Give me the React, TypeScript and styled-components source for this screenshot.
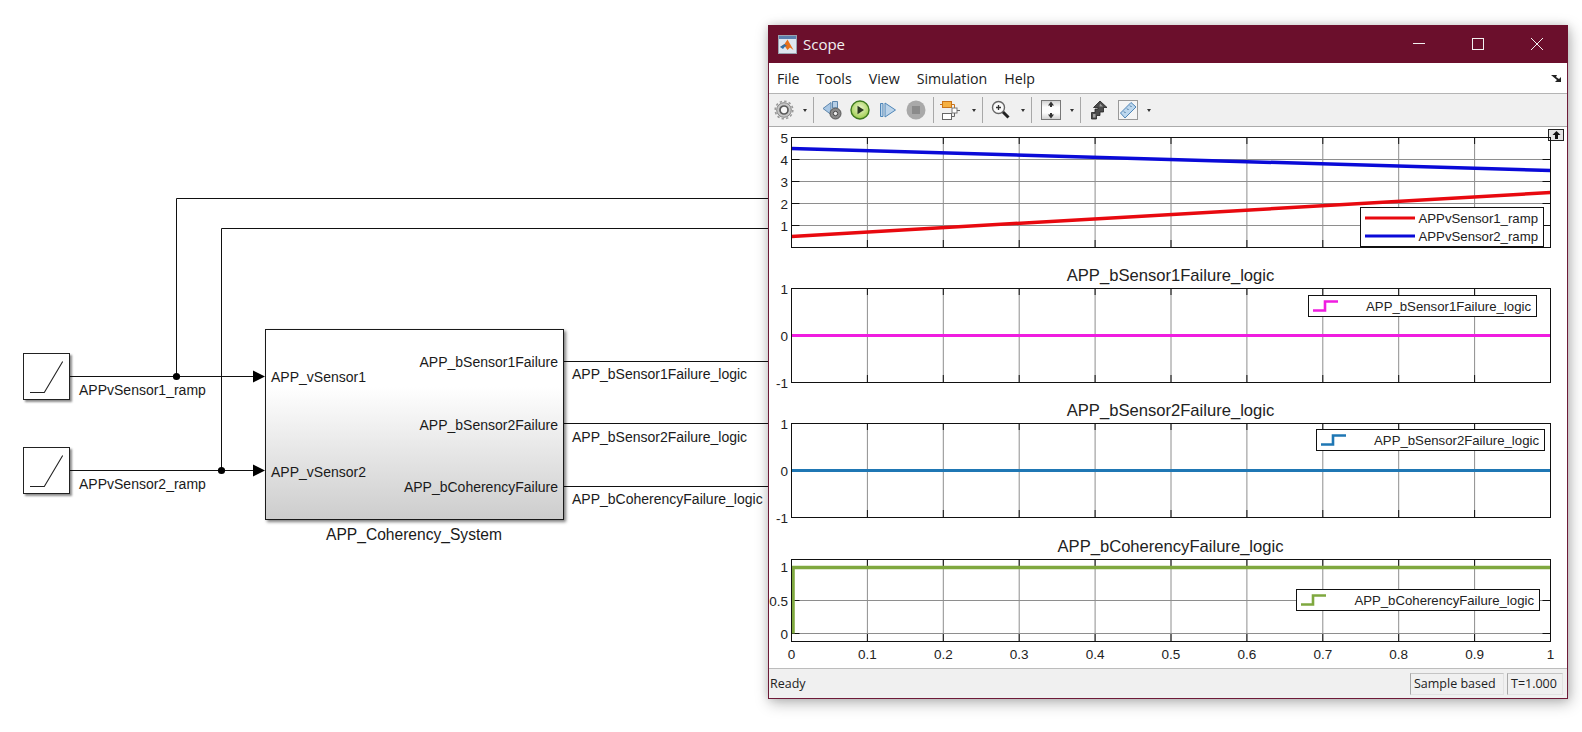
import React from "react";
import styled, { createGlobalStyle } from "styled-components";

const GlobalStyle = createGlobalStyle`
  html, body {
    margin: 0;
    padding: 0;
    background: #ffffff;
    overflow: hidden;
  }
  #root {
    width: 1582px;
    height: 732px;
  }
`;

const Page = styled.div`
  position: relative;
  width: 1582px;
  height: 732px;
  background: #fff;
  overflow: hidden;
  font-family: "Liberation Sans", Arial, sans-serif;
  color: #1a1a1a;
`;

/* ---------- simulink canvas ---------- */

const Wires = styled.svg`
  position: absolute;
  left: 0;
  top: 0;
`;

const Ramp = styled.div<{ $top: number }>`
  position: absolute;
  left: 23px;
  top: ${(p) => p.$top}px;
  width: 45px;
  height: 45px;
  border: 1px solid #222;
  background: #fff;
  box-shadow: 2px 2px 2px rgba(0, 0, 0, 0.45);
`;

const Subsystem = styled.div`
  position: absolute;
  left: 265px;
  top: 329px;
  width: 297px;
  height: 189px;
  border: 1px solid #1a1a1a;
  background: linear-gradient(180deg, #fff 0%, #fff 30%, #cdcdcd 100%);
  box-shadow: 2px 2px 3px rgba(0, 0, 0, 0.5);
`;

const Label = styled.span<{ $x: number; $y: number; $right?: boolean; $big?: boolean }>`
  position: absolute;
  ${(p) => (p.$right ? `right: ${1582 - p.$x}px;` : `left: ${p.$x}px;`)}
  top: ${(p) => p.$y}px;
  font-size: ${(p) => (p.$big ? 15.6 : 14)}px;
  line-height: 16px;
  white-space: nowrap;
`;

/* ---------- scope window ---------- */

const ScopeWindow = styled.div`
  position: absolute;
  left: 768px;
  top: 25px;
  width: 800px;
  height: 674px;
  box-sizing: border-box;
  border: 1px solid #6e1a38;
  border-top: none;
  background: #fff;
  display: flex;
  flex-direction: column;
  box-shadow: 2px 4px 14px rgba(0, 0, 0, 0.28), 0 0 8px rgba(0, 0, 0, 0.12);
`;

const TitleBar = styled.div`
  height: 38px;
  margin: 0 -1px;
  background: #6b0f2c;
  display: flex;
  align-items: center;
  padding: 0 2px 0 10px;
  color: #f2f0f0;
  font-family: "Open Sans", sans-serif;
  font-size: 15px;
  flex: none;
`;

const TitleText = styled.span`
  margin-left: 6px;
  flex: 1;
`;

const WindowButton = styled.div`
  width: 59px;
  height: 38px;
  display: flex;
  align-items: center;
  justify-content: center;
`;

const MenuBar = styled.div`
  height: 30px;
  flex: none;
  display: flex;
  align-items: center;
  padding: 0 5px 0 8px;
  gap: 17px;
  font-family: "Open Sans", sans-serif;
  font-size: 14.2px;
  color: #202020;
  border-bottom: 1px solid #b4b4b4;
`;

const MenuSpacer = styled.div`
  flex: 1;
`;

const Toolbar = styled.div`
  height: 32px;
  flex: none;
  background: #f0f0f0;
  border-bottom: 1px solid #ababab;
  display: flex;
  align-items: center;
  padding-left: 5px;
`;

const ToolIcon = styled.svg<{ $gap?: number }>`
  flex: none;
  display: block;
  margin-left: ${(p) => p.$gap ?? 0}px;
`;

const Caret = styled.div<{ $gap: number }>`
  flex: none;
  margin-left: ${(p) => p.$gap}px;
  width: 0;
  height: 0;
  border-left: 2.5px solid transparent;
  border-right: 2.5px solid transparent;
  border-top: 3px solid #333;
`;

const ToolSep = styled.div<{ $gap: number }>`
  flex: none;
  margin-left: ${(p) => p.$gap}px;
  width: 1px;
  height: 26px;
  background: #a8a8a8;
`;

const PlotArea = styled.div`
  flex: 1;
  position: relative;
  padding-top: 10px;
  background: #fff;
  min-height: 0;
`;

const PlotTitle = styled.div<{ $h: number }>`
  height: ${(p) => p.$h}px;
  box-sizing: border-box;
  margin-left: 22px;
  width: 759px;
  font-size: 16.6px;
  line-height: 19px;
  display: flex;
  align-items: flex-end;
  justify-content: center;
  padding-bottom: 3px;
  color: #222;
`;

const AxesWrap = styled.div`
  position: relative;
  width: 797px;
`;

const AxesSvg = styled.svg`
  display: block;
  overflow: visible;
`;

const Legend = styled.div<{ $right: number; $top: number; $h: number }>`
  position: absolute;
  right: ${(p) => p.$right}px;
  top: ${(p) => p.$top}px;
  height: ${(p) => p.$h}px;
  box-sizing: border-box;
  border: 1px solid #111;
  background: #fff;
  display: flex;
  flex-direction: column;
  justify-content: center;
  padding: 0 5px 0 4px;
  font-size: 13.2px;
  color: #222;
`;

const LegendRow = styled.div<{ $w: number }>`
  display: flex;
  align-items: center;
  height: 18px;
  white-space: nowrap;
  svg {
    flex: none;
    display: block;
    margin-right: ${(p) => p.$w}px;
  }
`;

const TopButton = styled.div`
  position: absolute;
  right: 3px;
  top: 2px;
  width: 14px;
  height: 10px;
  border: 1px solid #222;
  background: #e4e4e4;
  display: flex;
  align-items: center;
  justify-content: center;
`;

const StatusBar = styled.div`
  height: 29px;
  flex: none;
  background: #f0f0f0;
  border-top: 1px solid #bcbcbc;
  display: flex;
  align-items: center;
  padding: 0 4px 0 1px;
  font-family: "Open Sans", sans-serif;
  font-size: 12.5px;
  color: #222;
`;

const StatusText = styled.span`
  flex: 1;
`;

const StatusCell = styled.div<{ $w: number }>`
  width: ${(p) => p.$w}px;
  height: 22px;
  box-sizing: border-box;
  margin-left: 3px;
  border-left: 1px solid #a8a8a8;
  border-top: 1px solid #c4c4c4;
  border-right: 1px solid #e2e2e2;
  border-bottom: 1px solid #e2e2e2;
  display: flex;
  align-items: center;
  padding-left: 3px;
  white-space: nowrap;
`;

/* ---------- plot data ---------- */

const LEFT = 22;
const WIDTH = 759;
const xTicks = [0, 0.1, 0.2, 0.3, 0.4, 0.5, 0.6, 0.7, 0.8, 0.9, 1];

interface AxesProps {
  height: number;
  yTicks: { v: number; label: string }[];
  yMin: number;
  yMax: number;
  lines: { color: string; width: number; points: [number, number][] }[];
  showX?: boolean;
  hGrid?: boolean;
}

const Axes = (props: AxesProps) => {
  const { height, yTicks, yMin, yMax, lines } = props;
  const px = (x: number) => LEFT + 0.5 + x * WIDTH;
  const py = (y: number) => 0.5 + ((yMax - y) / (yMax - yMin)) * height;
  return (
    <AxesSvg width={797} height={height}>
      {xTicks.slice(1, -1).map((t) => (
        <g key={t}>
          <line x1={px(t)} x2={px(t)} y1={0} y2={height} stroke="#8e8e8e" />
          <line x1={px(t)} x2={px(t)} y1={0} y2={7} stroke="#111" />
          <line x1={px(t)} x2={px(t)} y1={height - 7} y2={height} stroke="#111" />
        </g>
      ))}
      {props.hGrid &&
        yTicks.map((t) => (
          <g key={t.label}>
            <line x1={px(0)} x2={px(1)} y1={py(t.v)} y2={py(t.v)} stroke="#8e8e8e" />
            <line x1={px(0)} x2={px(0) + 8} y1={py(t.v)} y2={py(t.v)} stroke="#111" />
            <line x1={px(1) - 8} x2={px(1)} y1={py(t.v)} y2={py(t.v)} stroke="#111" />
          </g>
        ))}
      {lines.map((l) => (
        <polyline
          key={l.color}
          fill="none"
          stroke={l.color}
          strokeWidth={l.width}
          points={l.points.map(([x, y]) => `${px(x)},${py(y)}`).join(" ")}
        />
      ))}
      <rect x={px(0)} y={0.5} width={WIDTH} height={height} fill="none" stroke="#111" />
      <g fontFamily="Liberation Sans, Arial, sans-serif" fontSize={13.5} fill="#222">
        {yTicks.map((t) => (
          <text key={t.label} x={LEFT - 3} y={py(t.v) + 5} textAnchor="end">
            {t.label}
          </text>
        ))}
        {props.showX &&
          xTicks.map((t) => (
            <text key={t} x={px(t)} y={height + 18} textAnchor="middle">
              {t}
            </text>
          ))}
      </g>
    </AxesSvg>
  );
};

const StepMark = ({ color }: { color: string }) => (
  <svg width={25} height={14} viewBox="0 0 25 14">
    <path d="M0 11.5H12V2.5H25" fill="none" stroke={color} strokeWidth={2.6} />
  </svg>
);

const LineMark = ({ color }: { color: string }) => (
  <svg width={50} height={6} viewBox="0 0 50 6">
    <line x1={0} x2={50} y1={3} y2={3} stroke={color} strokeWidth={3} />
  </svg>
);

const RampIcon = () => (
  <svg width={45} height={45} viewBox="0 0 45 45">
    <path d="M6 38.5H20.3L38.7 7.5" fill="none" stroke="#222" strokeWidth={1.1} />
  </svg>
);

/* ---------- toolbar icons ---------- */

const GearIcon = () => (
  <ToolIcon width={20} height={20} viewBox="0 0 20 20">
    <circle cx={10} cy={10} r={8.8} fill="none" stroke="#9a9a9a" strokeWidth={1.6} strokeDasharray="2.4 2.2" />
    <circle cx={10} cy={10} r={7.3} fill="#c6c6c6" stroke="#868686" strokeWidth={1} />
    <circle cx={10} cy={10} r={4} fill="#f6f6f6" stroke="#5a5a5a" strokeWidth={1.7} />
  </ToolIcon>
);

const BackIcon = () => (
  <ToolIcon $gap={8} width={22} height={22} viewBox="0 0 22 22">
    <path d="M1 9.5L9 3.5V15.5Z" fill="#a9c7e4" stroke="#5d86ad" />
    <path d="M10.5 2.5H15.5V9H10.5Z" fill="#b7cfe6" stroke="#5d86ad" />
    <circle cx={13.5} cy={14.5} r={5.5} fill="#8a8a8a" stroke="#555" />
    <circle cx={13.5} cy={14.5} r={2.2} fill="#eee" stroke="#444" />
  </ToolIcon>
);

const PlayIcon = () => (
  <ToolIcon $gap={6} width={20} height={20} viewBox="0 0 20 20">
    <defs>
      <radialGradient id="playFill" cx="50%" cy="40%" r="60%">
        <stop offset="0%" stopColor="#eef7cf" />
        <stop offset="100%" stopColor="#9ccb4a" />
      </radialGradient>
    </defs>
    <circle cx={10} cy={10} r={9} fill="url(#playFill)" stroke="#3e7a1f" strokeWidth={1.4} />
    <path d="M7.5 5.8L14 10L7.5 14.2Z" fill="#2c3a22" />
  </ToolIcon>
);

const StepIcon = () => (
  <ToolIcon $gap={9} width={18} height={18} viewBox="0 0 18 18">
    <path d="M1.5 2.5H4V15.5H1.5Z" fill="#bcd4ea" stroke="#4f86b8" />
    <path d="M6 2L16.5 9L6 16Z" fill="#bcd4ea" stroke="#4f86b8" />
  </ToolIcon>
);

const StopIcon = () => (
  <ToolIcon $gap={9} width={20} height={20} viewBox="0 0 20 20">
    <circle cx={10} cy={10} r={9.5} fill="#a9a9a9" />
    <rect x={6} y={6} width={8} height={8} fill="#8b8b8b" />
  </ToolIcon>
);

const SignalIcon = () => (
  <ToolIcon $gap={5} width={22} height={22} viewBox="0 0 22 22">
    <rect x={3.5} y={2.5} width={9} height={6} fill="#f5b041" stroke="#c9741a" />
    <path d="M1 5.5H3.5M12.5 5.5H15.5V9" fill="none" stroke="#c9741a" />
    <rect x={13} y={9} width={5} height={5} fill="#fff" stroke="#777" />
    <rect x={3.5} y={14.5} width={9} height={6} fill="#fff" stroke="#666" />
    <path d="M12.5 17.5H15.5V14M18 11.5H21" fill="none" stroke="#666" />
  </ToolIcon>
);

const ZoomIcon = () => (
  <ToolIcon $gap={8} width={20} height={20} viewBox="0 0 20 20">
    <circle cx={7.5} cy={7.5} r={6} fill="#fbfbfb" stroke="#666" strokeWidth={1.4} />
    <path d="M5 7.5H10M7.5 5V10" stroke="#333" strokeWidth={1.3} />
    <path d="M12 12L17.5 17.5" stroke="#222" strokeWidth={3} />
  </ToolIcon>
);

const FitIcon = () => (
  <ToolIcon $gap={9} width={20} height={20} viewBox="0 0 20 20">
    <defs>
      <linearGradient id="fitFill" x1="0" y1="0" x2="0" y2="1">
        <stop offset="0%" stopColor="#cfcfcf" />
        <stop offset="35%" stopColor="#fdfdfd" />
        <stop offset="65%" stopColor="#fdfdfd" />
        <stop offset="100%" stopColor="#cfcfcf" />
      </linearGradient>
    </defs>
    <rect x={0.5} y={0.5} width={19} height={19} fill="url(#fitFill)" stroke="#777" />
    <path d="M10 1.5L13 5.5H11V7H9V5.5H7Z M10 18.5L13 14.5H11V13H9V14.5H7Z" fill="#333" />
  </ToolIcon>
);

const LayoutIcon = () => (
  <ToolIcon $gap={9} width={18} height={20} viewBox="0 0 18 20">
    <path d="M10 1L17 7.5H13.5V12H10V15.5H6.5V19H1.5V12.5H5V9H8V7.5H3.5Z" fill="#4c4c4c" stroke="#222" strokeWidth={0.8} />
    <path d="M10 3.5L13 6.5H9.5Z" fill="#a0a0a0" />
    <path d="M3 14H5.5V17.5H3Z" fill="#a0a0a0" />
  </ToolIcon>
);

const RulerIcon = () => (
  <ToolIcon $gap={10} width={20} height={20} viewBox="0 0 20 20">
    <rect x={0.5} y={0.5} width={19} height={19} fill="#f5f5f5" stroke="#999" />
    <path d="M2.5 13L13 2.5L18 7L7 18Z" fill="#bcd7ee" stroke="#4f86b8" />
    <path d="M6 11.5L7.5 13M9 8.5L10.5 10M12 5.5L13.5 7" stroke="#3a6a94" />
  </ToolIcon>
);

const MatlabIcon = () => (
  <svg width={19} height={19} viewBox="0 0 19 19">
    <rect x={0.5} y={0.5} width={18} height={18} fill="#dfe6f0" stroke="#9aa3b0" />
    <rect x={1} y={1} width={17} height={3} fill="#5b7fae" />
    <path d="M2 12L6.5 9L9.5 4.5L15.5 15L12 12.5L9.5 15L7 11.5Z" fill="#e8701a" />
    <path d="M2 12L6.5 9L9 11L7 11.5L5 14Z" fill="#2f6fa8" />
  </svg>
);

export default function App() {
  return (
    <Page>
      <GlobalStyle />
      <Wires width={770} height={560}>
        <g fill="none" stroke="#111" strokeWidth={1}>
          <path d="M69 376.5H254" />
          <path d="M69 470.5H254" />
          <path d="M176.5 376.5V198.5H768" />
          <path d="M221.5 470.5V228.5H768" />
          <path d="M563 361.5H768" />
          <path d="M563 423.5H768" />
          <path d="M563 486.5H768" />
        </g>
        <g fill="#000">
          <circle cx={176.5} cy={376.5} r={3.6} />
          <circle cx={221.5} cy={470.5} r={3.6} />
          <path d="M253 370.5L265 376.5L253 382.5Z" />
          <path d="M253 464.5L265 470.5L253 476.5Z" />
        </g>
      </Wires>

      <Ramp $top={353}>
        <RampIcon />
      </Ramp>
      <Ramp $top={447}>
        <RampIcon />
      </Ramp>
      <Subsystem />

      <Label $x={79} $y={382}>APPvSensor1_ramp</Label>
      <Label $x={79} $y={476}>APPvSensor2_ramp</Label>
      <Label $x={271} $y={369}>APP_vSensor1</Label>
      <Label $x={271} $y={464}>APP_vSensor2</Label>
      <Label $x={558} $y={354} $right>APP_bSensor1Failure</Label>
      <Label $x={558} $y={417} $right>APP_bSensor2Failure</Label>
      <Label $x={558} $y={479} $right>APP_bCoherencyFailure</Label>
      <Label $x={572} $y={366}>APP_bSensor1Failure_logic</Label>
      <Label $x={572} $y={429}>APP_bSensor2Failure_logic</Label>
      <Label $x={572} $y={491}>APP_bCoherencyFailure_logic</Label>
      <Label $x={326} $y={527} $big>APP_Coherency_System</Label>

      <ScopeWindow>
        <TitleBar>
          <MatlabIcon />
          <TitleText>Scope</TitleText>
          <WindowButton>
            <svg width={12} height={12} viewBox="0 0 12 12">
              <path d="M0 5.5H12" stroke="#f2f0f0" />
            </svg>
          </WindowButton>
          <WindowButton>
            <svg width={12} height={12} viewBox="0 0 12 12">
              <rect x={0.5} y={0.5} width={11} height={11} fill="none" stroke="#f2f0f0" />
            </svg>
          </WindowButton>
          <WindowButton>
            <svg width={12} height={12} viewBox="0 0 12 12">
              <path d="M0 0L12 12M12 0L0 12" stroke="#f2f0f0" />
            </svg>
          </WindowButton>
        </TitleBar>

        <MenuBar>
          <span>File</span>
          <span>Tools</span>
          <span>View</span>
          <span>Simulation</span>
          <span>Help</span>
          <MenuSpacer />
          <svg width={11} height={9} viewBox="0 0 11 9">
            <path d="M0 1L6 1L5 3L8 5L10 3V8H4L6 6L3 3.5Z" fill="#222" />
          </svg>
        </MenuBar>

        <Toolbar>
          <GearIcon />
          <Caret $gap={8.5} />
          <ToolSep $gap={6.5} />
          <BackIcon />
          <PlayIcon />
          <StepIcon />
          <StopIcon />
          <ToolSep $gap={7} />
          <SignalIcon />
          <Caret $gap={10.5} />
          <ToolSep $gap={6.5} />
          <ZoomIcon />
          <Caret $gap={9.5} />
          <ToolSep $gap={6.5} />
          <FitIcon />
          <Caret $gap={8.5} />
          <ToolSep $gap={6.5} />
          <LayoutIcon />
          <RulerIcon />
          <Caret $gap={8.5} />
        </Toolbar>

        <PlotArea>
          <TopButton>
            <svg width={9} height={8} viewBox="0 0 9 8">
              <path d="M4.5 0L8.5 4H6V8H3V4H0.5Z" fill="#111" />
            </svg>
          </TopButton>
          <AxesWrap>
            <Axes
              height={110}
              yMin={0}
              yMax={5}
              hGrid
              yTicks={[5, 4, 3, 2, 1].map((v) => ({ v, label: String(v) }))}
              lines={[
                { color: "#e8090f", width: 3.5, points: [[0, 0.5], [1, 2.5]] },
                { color: "#0a0ad8", width: 3.5, points: [[0, 4.5], [1, 3.5]] },
              ]}
            />
            <Legend $right={22} $top={70} $h={40}>
              <LegendRow $w={4}>
                <LineMark color="#e8090f" />
                APPvSensor1_ramp
              </LegendRow>
              <LegendRow $w={4}>
                <LineMark color="#0a0ad8" />
                APPvSensor2_ramp
              </LegendRow>
            </Legend>
          </AxesWrap>

          <PlotTitle $h={41}>APP_bSensor1Failure_logic</PlotTitle>
          <AxesWrap>
            <Axes
              height={94}
              yMin={-1}
              yMax={1}
              yTicks={[1, 0, -1].map((v) => ({ v, label: String(v) }))}
              lines={[{ color: "#f01de0", width: 3, points: [[0, 0], [1, 0]] }]}
            />
            <Legend $right={29} $top={7} $h={22}>
              <LegendRow $w={28}>
                <StepMark color="#f01de0" />
                APP_bSensor1Failure_logic
              </LegendRow>
            </Legend>
          </AxesWrap>

          <PlotTitle $h={41}>APP_bSensor2Failure_logic</PlotTitle>
          <AxesWrap>
            <Axes
              height={94}
              yMin={-1}
              yMax={1}
              yTicks={[1, 0, -1].map((v) => ({ v, label: String(v) }))}
              lines={[{ color: "#1f77b4", width: 3, points: [[0, 0], [1, 0]] }]}
            />
            <Legend $right={21} $top={6} $h={22}>
              <LegendRow $w={28}>
                <StepMark color="#1f77b4" />
                APP_bSensor2Failure_logic
              </LegendRow>
            </Legend>
          </AxesWrap>

          <PlotTitle $h={42}>APP_bCoherencyFailure_logic</PlotTitle>
          <AxesWrap>
            <Axes
              height={82}
              yMin={-0.121}
              yMax={1.121}
              hGrid
              showX
              yTicks={[
                { v: 1, label: "1" },
                { v: 0.5, label: "0.5" },
                { v: 0, label: "0" },
              ]}
              lines={[{ color: "#7fa83f", width: 3.5, points: [[0.002, 0], [0.002, 1], [1, 1]] }]}
            />
            <Legend $right={26} $top={30} $h={22}>
              <LegendRow $w={28}>
                <StepMark color="#7fa83f" />
                APP_bCoherencyFailure_logic
              </LegendRow>
            </Legend>
          </AxesWrap>
        </PlotArea>

        <StatusBar>
          <StatusText>Ready</StatusText>
          <StatusCell $w={94}>Sample based</StatusCell>
          <StatusCell $w={56}>T=1.000</StatusCell>
        </StatusBar>
      </ScopeWindow>
    </Page>
  );
}
